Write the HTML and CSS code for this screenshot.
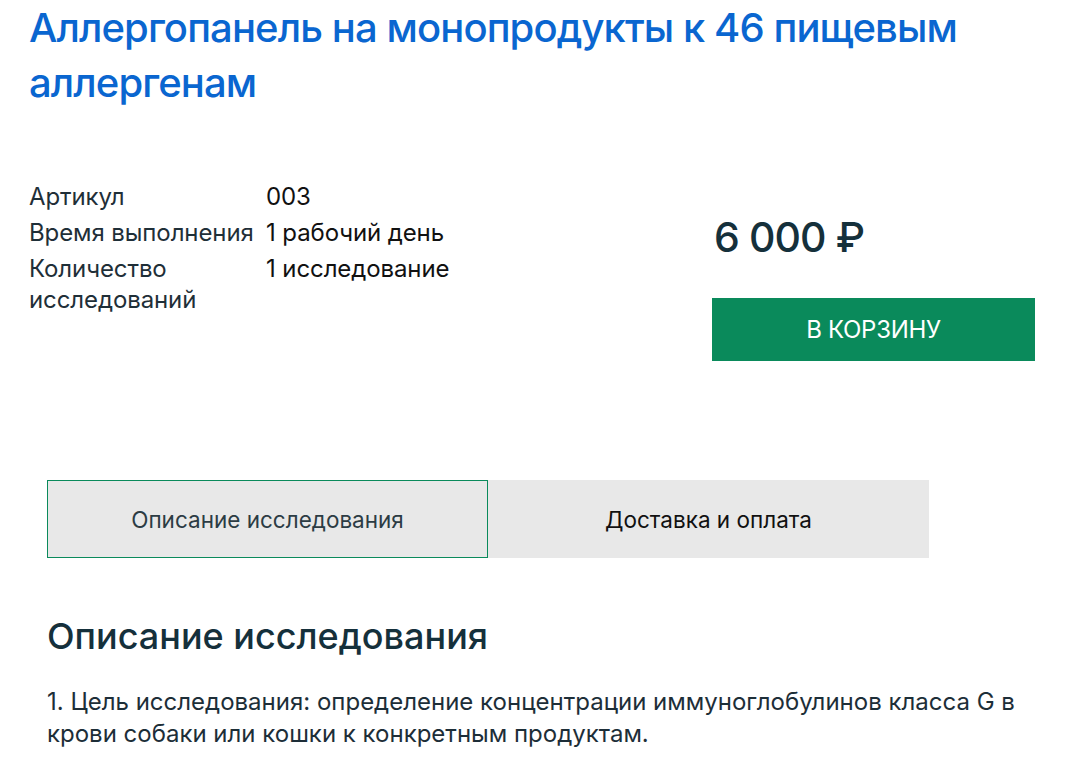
FILE: index.html
```html
<!DOCTYPE html>
<html lang="ru">
<head>
<meta charset="utf-8">
<title>Аллергопанель</title>
<link rel="stylesheet" href="styles.css">
</head>
<body>
<div class="page">
  <h1 class="title">Аллергопанель на монопродукты к 46 пищевым аллергенам</h1>
  <div class="product">
    <div class="props">
      <div class="row"><div class="label">Артикул</div><div class="value">003</div></div>
      <div class="row"><div class="label">Время выполнения</div><div class="value">1 рабочий день</div></div>
      <div class="row"><div class="label">Количество исследований</div><div class="value">1 исследование</div></div>
    </div>
    <div class="buy">
      <div class="price">6 000 ₽</div>
      <button class="cart">В КОРЗИНУ</button>
    </div>
  </div>
  <div class="tabs-section">
    <div class="tabs">
      <div class="tab active">Описание исследования</div>
      <div class="tab">Доставка и оплата</div>
    </div>
    <h2 class="desc-title">Описание исследования</h2>
    <p class="desc">1. Цель исследования: определение концентрации иммуноглобулинов класса G в крови собаки или кошки к конкретным продуктам.</p>
  </div>
</div>
</body>
</html>
```
FILE: styles.css
```css
html, body {
  margin: 0;
  padding: 0;
  background: #ffffff;
}
body {
  font-family: "Inter", "Roboto", "Liberation Sans", sans-serif;
  color: #17303a;
}
.page {
  padding: 0 0 0 29px;
  width: 1010px;
}
.title {
  margin: 0;
  font-size: 40px;
  line-height: 55px;
  font-weight: 500;
  color: #0a66d0;
  letter-spacing: -0.9px;
}
.product {
  display: flex;
  margin-top: 71px;
  justify-content: space-between;
}
.props {
  display: flex;
  flex-direction: column;
  gap: 5px;
  font-size: 24px;
  line-height: 31px;
  letter-spacing: -0.1px;
}
.row {
  display: flex;
}
.label {
  width: 237px;
  color: #1f2f38;
}
.value {
  color: #111;
}
.buy {
  width: 323px;
  margin-right: 4px;
  margin-top: 30px;
}
.price {
  font-size: 41px;
  font-weight: 500;
  line-height: 52px;
  color: #15303b;
  padding-left: 2px;
  letter-spacing: -0.9px;
}
.cart {
  display: block;
  margin-top: 35px;
  width: 323px;
  height: 63px;
  border: none;
  background: #0a8a5b;
  color: #fff;
  font-family: inherit;
  font-size: 24px;
  letter-spacing: -0.3px;
}
.tabs-section {
  margin-top: 119px;
  padding-left: 18px;
}
.tabs {
  display: flex;
}
.tab {
  width: 441px;
  height: 78px;
  box-sizing: border-box;
  background: #e8e8e8;
  display: flex;
  align-items: center;
  justify-content: center;
  font-size: 22.5px;
  color: #111;
}
.tab.active {
  border: 1px solid #0a8a5b;
  color: #2c3c44;
}
.desc-title {
  margin: 56px 0 0;
  font-size: 36px;
  font-weight: 500;
  line-height: 44px;
  color: #15303b;
}
.desc {
  margin: 28px 0 0;
  font-size: 24px;
  line-height: 32px;
  color: #1d2e38;
  width: 990px;
}
```
